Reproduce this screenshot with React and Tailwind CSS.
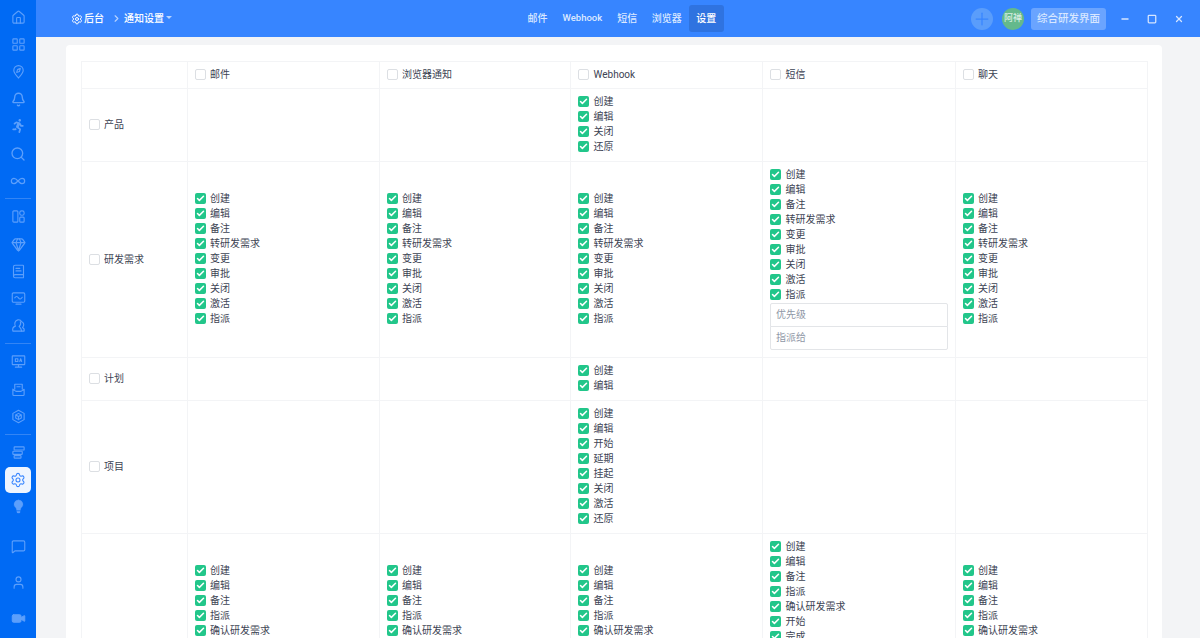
import React from "react";
import {
  Home, LayoutGrid, Bell, Search, Infinity as InfinityIcon, Gem, BookText,
  Settings, MessageSquare, User, Video, ChevronRight, Plus, Minus, Square, X, Check,
} from "lucide-react";
import { FaRunning } from "react-icons/fa";

const font = { fontFamily: '"Roboto", "Noto Sans CJK SC", sans-serif' };

const storyActions = ["创建", "编辑", "备注", "转研发需求", "变更", "审批", "关闭", "激活", "指派"];
const taskActions = ["创建", "编辑", "备注", "指派", "确认研发需求", "开始", "完成", "关闭", "激活", "取消", "暂停", "延期", "恢复", "评论"];

const rows = [
  { name: "产品", cells: [[], [], ["创建", "编辑", "关闭", "还原"], [], []] },
  { name: "研发需求", cells: [storyActions, storyActions, storyActions, storyActions, storyActions], selects: true },
  { name: "计划", cells: [[], [], ["创建", "编辑"], [], []] },
  { name: "项目", cells: [[], [], ["创建", "编辑", "开始", "延期", "挂起", "关闭", "激活", "还原"], [], []] },
  { name: "任务", cells: [taskActions, taskActions, taskActions, taskActions, taskActions], selects: true },
];

const Svg = ({ children, fill = "none", width = 1.8 }) => (
  <svg width="15" height="15" viewBox="0 0 24 24" fill={fill} stroke="currentColor" strokeWidth={width} strokeLinecap="round" strokeLinejoin="round">
    {children}
  </svg>
);

const Pin = () => (
  <Svg>
    <path d="M12 22.500c-.8-1.800-7.500-7-7.500-12.500a7.500 7.500 0 0 1 15 0c0 5.500-6.700 10.700-7.500 12.500z" />
    <path d="M15 7l-1.500 5-4.500 1.500L10.500 9z" />
  </Svg>
);

const Panels = () => (
  <Svg>
    <rect x="3" y="3" width="8" height="18" rx="1.500" />
    <rect x="14" y="3" width="7" height="7" rx="3" />
    <rect x="14" y="13" width="7" height="8" rx="1.500" />
  </Svg>
);

const Wave = () => (
  <Svg>
    <rect x="2" y="3" width="20" height="15" rx="2" />
    <path d="M6 11c2-3 4-3 6 0s4 2 6-1M8 21h8" />
  </Svg>
);

const QaScreen = () => (
  <Svg>
    <rect x="2" y="3" width="20" height="14" rx="1" />
    <path d="M12 17v4M7 21h10M7 7.500h4v4.500H7zM14 12l1.500-4.500L17 12" />
  </Svg>
);

const Team = () => (
  <Svg>
    <path d="M3 21c-1-4 1-7 4-8-2-3-1-9 4-10 3-.5 5 1 6 3 3 1 4 4 3 6.500-.5 1.500-1.500 2-1.500 3 2 .5 3 3 2.500 5.500z" />
    <path d="M15 6c1 3 0 6-2 7.500.5 1 3 2 4 7.500" />
  </Svg>
);

const Tray = () => (
  <Svg>
    <path d="M6 11V3.500h12V11M3 11.500V20a1.500 1.500 0 0 0 1.500 1.500h15A1.500 1.500 0 0 0 21 20v-8.500l-5 3.500H8z" />
    <path d="M9.500 7.500h5" />
  </Svg>
);

const Cube = () => (
  <Svg>
    <path d="M12 2l9 5v10l-9 5-9-5V7z" />
    <path d="M7.500 9.500L12 7l4.500 2.500v5L12 17l-4.500-2.500zM7.500 9.500L12 12l4.500-2.500M12 12v5" />
  </Svg>
);

const Steps = () => (
  <Svg>
    <rect x="5" y="3" width="16" height="5" rx="1" />
    <rect x="3" y="10" width="15" height="5" rx="1" />
    <rect x="5" y="17" width="11" height="4" rx="1" />
  </Svg>
);

const Bulb = () => (
  <Svg fill="currentColor" width={0.5}>
    <path d="M12 1.500a7 7 0 0 0-4 12.800c.6 1 .8 2.200.8 3.700h6.400c0-1.500.2-2.700.8-3.700A7 7 0 0 0 12 1.500zM9.500 19.500h5V21a1.500 1.500 0 0 1-1.500 1.500h-2A1.500 1.500 0 0 1 9.500 21z" />
  </Svg>
);

const SideIcon = ({ children }) => (
  <div className="h-[27.2px] flex items-center justify-center text-[#5c9ffb]">{children}</div>
);

const Divider = () => <div className="h-px mx-[5px] my-1 bg-[#3385f5]" />;

const Sidebar = () => (
  <aside className="w-[36px] shrink-0 bg-[#006af4] flex flex-col pt-[4px] pb-[6px]">
    <SideIcon><Home size={15} strokeWidth={1.8} /></SideIcon>
    <SideIcon><LayoutGrid size={15} strokeWidth={1.8} /></SideIcon>
    <SideIcon><Pin /></SideIcon>
    <SideIcon><Bell size={15} strokeWidth={2.2} /></SideIcon>
    <SideIcon><FaRunning size={14} /></SideIcon>
    <SideIcon><Search size={16} strokeWidth={2} /></SideIcon>
    <SideIcon><InfinityIcon size={16} strokeWidth={1.8} /></SideIcon>
    <Divider />
    <SideIcon><Panels /></SideIcon>
    <SideIcon><Gem size={15} strokeWidth={2} /></SideIcon>
    <SideIcon><BookText size={15} strokeWidth={1.8} /></SideIcon>
    <SideIcon><Wave /></SideIcon>
    <SideIcon><Team /></SideIcon>
    <Divider />
    <SideIcon><QaScreen /></SideIcon>
    <SideIcon><Tray /></SideIcon>
    <SideIcon><Cube /></SideIcon>
    <Divider />
    <SideIcon><Steps /></SideIcon>
    <div className="h-[27.2px] flex items-center justify-center">
      <div className="w-[26px] h-[26px] rounded-[5px] bg-[#eef5ff] flex items-center justify-center text-[#3785ff]">
        <Settings size={16} strokeWidth={1.6} />
      </div>
    </div>
    <SideIcon><Bulb /></SideIcon>
    <div className="mt-auto flex flex-col gap-[9px]">
      <SideIcon><MessageSquare size={15} strokeWidth={1.8} /></SideIcon>
      <SideIcon><User size={15} strokeWidth={1.8} /></SideIcon>
      <SideIcon><Video size={15} fill="currentColor" strokeWidth={1.6} /></SideIcon>
    </div>
  </aside>
);

const Topbar = () => (
  <header className="h-[37px] shrink-0 bg-[#3785ff] flex items-center text-white text-[10px] font-medium">
    <div className="w-[484px] pl-[35px] flex items-center shrink-0">
      <Settings size={12} strokeWidth={2} />
      <span className="ml-[1px]">后台</span>
      <ChevronRight size={11} strokeWidth={2.5} className="ml-[7px] mr-[2px] text-[#b7d3ff]" />
      <span>通知设置</span>
      <span className="ml-[2px] mb-[2px] border-x-[3px] border-t-[3px] border-x-transparent border-t-[#b7d3ff]" />
    </div>
    <nav className="flex items-center text-[#dce9ff]">
      <a className="px-[7.5px]">邮件</a>
      <a className="px-[7.5px] text-[9.5px]">Webhook</a>
      <a className="px-[7.5px]">短信</a>
      <a className="px-[7px]">浏览器</a>
      <a className="px-[7.5px] h-[27px] leading-[27px] rounded-[3px] bg-[#2f73e0] text-white">设置</a>
    </nav>
    <div className="ml-auto flex items-center">
      <div className="w-[22px] h-[22px] rounded-full bg-[#5a9dfb] flex items-center justify-center text-[#3785ff]">
        <Plus size={20} strokeWidth={1.5} />
      </div>
      <div className="ml-[9px] w-[22px] h-[22px] rounded-full bg-[#64b98c] text-[#d8eee2] flex items-center justify-center text-[9px]">阿禅</div>
      <button className="ml-[7px] w-[75px] h-[22px] rounded-[3px] bg-[#6aa4ff] text-[#d8e7ff] text-[10.5px]">综合研发界面</button>
      <div className="w-[94px] pl-[14px] flex items-center gap-[17px] text-[#d5e5ff]">
        <Minus size={10} strokeWidth={4} />
        <Square size={10} strokeWidth={3} />
        <X size={10} strokeWidth={3} />
      </div>
    </div>
  </header>
);

const Tick = ({ label, checked }) => (
  <label className="flex items-center gap-[4.5px] h-[15px] whitespace-nowrap">
    {checked ? (
      <span className="w-[11px] h-[11px] rounded-[2px] bg-[#22c68a] flex items-center justify-center text-white">
        <Check size={9} strokeWidth={4} />
      </span>
    ) : (
      <span className="w-[11px] h-[11px] rounded-[2px] bg-white border border-[#dcdfe3]" />
    )}
    <span>{label}</span>
  </label>
);

const Select = ({ label, last }) => (
  <div className={`h-[24px] leading-[21px] px-[5px] border border-[#e3e5e8] bg-white text-[#8f97a6] ${last ? "-mt-px rounded-b-[2px]" : "rounded-t-[2px]"}`}>
    {label}
  </div>
);

const cellClass = "border border-[#f3f4f6] px-[7px] align-middle";

const SettingsTable = () => (
  <table className="w-[1066px] table-fixed border-collapse text-[10px] text-[#3c4353]">
    <colgroup>
      <col className="w-[106px]" />
      <col className="w-[192px]" />
      <col className="w-[191.5px]" />
      <col className="w-[192px]" />
      <col className="w-[192.5px]" />
      <col className="w-[192px]" />
    </colgroup>
    <thead>
      <tr className="h-[27px]">
        <th className={cellClass} />
        {["邮件", "浏览器通知", "Webhook", "短信", "聊天"].map((h) => (
          <th key={h} className={`${cellClass} font-normal text-left`}>
            <Tick label={h} />
          </th>
        ))}
      </tr>
    </thead>
    <tbody>
      {rows.map((row) => (
        <tr key={row.name}>
          <td className={`${cellClass} py-[6px]`}>
            <Tick label={row.name} />
          </td>
          {row.cells.map((items, i) => (
            <td key={i} className={`${cellClass} pt-[5px] pb-[7px]`}>
              {items.map((item) => (
                <Tick key={item} label={item} checked />
              ))}
              {row.selects && i === 3 && (
                <div className="mt-px">
                  <Select label="优先级" />
                  <Select label="指派给" last />
                </div>
              )}
            </td>
          ))}
        </tr>
      ))}
    </tbody>
  </table>
);

export default function App() {
  return (
    <div className="w-[1200px] h-[638px] flex overflow-hidden bg-[#f3f4f6]" style={font}>
      <Sidebar />
      <div className="flex-1 min-w-0 flex flex-col">
        <Topbar />
        <main className="flex-1 min-h-0 overflow-hidden pt-[8px] pl-[30px]">
          <div className="w-[1096px] bg-white rounded-t-[4px] pt-[15.5px] px-[14.5px]">
            <SettingsTable />
          </div>
        </main>
      </div>
    </div>
  );
}
